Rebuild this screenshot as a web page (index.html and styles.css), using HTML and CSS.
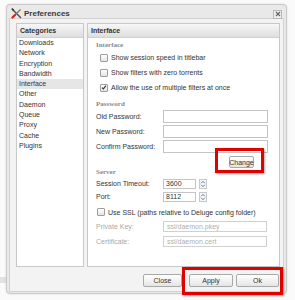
FILE: index.html
```html
<!DOCTYPE html>
<html>
<head>
<meta charset="utf-8">
<link rel="stylesheet" href="styles.css">
</head>
<body>
<div class="window">
  <div class="titlebar">
    <svg class="ticon" width="11" height="11" viewBox="0 0 11 11">
      <path d="M1.5 1.5 L9.5 9.5" stroke="#555" stroke-width="1.6" stroke-linecap="round"/>
      <path d="M9.5 1.5 L4 7" stroke="#777" stroke-width="1.2"/>
      <path d="M4 7 L1.5 9.5" stroke="#d22" stroke-width="2.2" stroke-linecap="round"/>
      <path d="M0.8 0.5 L2.8 2.5" stroke="#333" stroke-width="1.4"/>
    </svg>
    <span class="ttext">Preferences</span>
    <span class="tclose">
      <svg width="6" height="6" viewBox="0 0 6 6"><path d="M1 1 L5 5 M5 1 L1 5" stroke="#666" stroke-width="1.2"/></svg>
    </span>
  </div>
  <div class="frame">
    <div class="panels">
      <div class="cats">
        <div class="phead">Categories</div>
        <ul class="catlist">
          <li>Downloads</li>
          <li>Network</li>
          <li>Encryption</li>
          <li>Bandwidth</li>
          <li class="sel">Interface</li>
          <li>Other</li>
          <li>Daemon</li>
          <li>Queue</li>
          <li>Proxy</li>
          <li>Cache</li>
          <li>Plugins</li>
        </ul>
      </div>
      <div class="rp">
        <div class="phead">Interface</div>
        <div class="rbody">
          <div class="sect">Interface</div>
          <div class="checks">
            <div class="crow"><span class="cb"></span>Show session speed in titlebar</div>
            <div class="crow"><span class="cb"></span>Show filters with zero torrents</div>
            <div class="crow"><span class="cb on"><svg width="7" height="7" viewBox="0 0 7 7"><path d="M1.3 3.6 L2.8 5.2 L5.8 1.4" stroke="#333" stroke-width="1.3" fill="none"/></svg></span>Allow the use of multiple filters at once</div>
          </div>
          <div class="sect s2">Password</div>
          <div class="frow"><span class="flabel">Old Password:</span><span class="inp"></span></div>
          <div class="frow"><span class="flabel">New Password:</span><span class="inp"></span></div>
          <div class="frow"><span class="flabel">Confirm Password:</span><span class="inp"></span></div>
          <div class="brow"><span class="btn small">Change</span></div>
          <div class="sect s3">Server</div>
          <div class="srow"><span class="flabel">Session Timeout:</span><span class="sinp">3600</span><span class="spin"><svg width="8" height="10" viewBox="0 0 8 10"><path d="M1.5 4 L4 1.5 L6.5 4" stroke="#4b6e9e" stroke-width="1.2" fill="none"/><path d="M1.5 6 L4 8.5 L6.5 6" stroke="#4b6e9e" stroke-width="1.2" fill="none"/></svg></span></div>
          <div class="srow"><span class="flabel">Port:</span><span class="sinp">8112</span><span class="spin"><svg width="8" height="10" viewBox="0 0 8 10"><path d="M1.5 4 L4 1.5 L6.5 4" stroke="#4b6e9e" stroke-width="1.2" fill="none"/><path d="M1.5 6 L4 8.5 L6.5 6" stroke="#4b6e9e" stroke-width="1.2" fill="none"/></svg></span></div>
          <div class="crow ssl"><span class="cb"></span>Use SSL (paths relative to Deluge config folder)</div>
          <div class="krow"><span class="flabel dis">Private Key:</span><span class="kinp">ssl/daemon.pkey</span></div>
          <div class="krow"><span class="flabel dis">Certificate:</span><span class="kinp">ssl/daemon.cert</span></div>
        </div>
      </div>
    </div>
    <div class="footer">
      <span class="btn fb close">Close</span>
      <span class="btn fb apply">Apply</span>
      <span class="btn fb ok">Ok</span>
    </div>
  </div>
</div>
<div class="redbox rb1"></div>
<div class="redbox rb2"></div>
</body>
</html>
```
FILE: styles.css
```css
html, body { margin: 0; padding: 0; }
body {
  width: 295px; height: 300px; overflow: hidden; position: relative;
  background-color: #fafafa;
  font-family: "Liberation Sans", Arial, sans-serif;
  font-size: 7px; color: #333;
  white-space: nowrap;
}
body::before {
  content: ""; position: absolute; left: 0; top: 277px; width: 8px; height: 6px; background: #e2e2e2;
}
.window {
  position: relative;
  margin: 4px 0 0 6px; width: 281px; height: 290px; box-sizing: border-box;
  border: 1px solid #c9c9c9; border-radius: 4px;
  background: #e9e9e9;
  box-shadow: 0 0 2px rgba(0,0,0,0.15);
}
.titlebar { height: 12px; display: flex; align-items: center; padding: 1px 4px 0 4px; }
.ticon { margin-right: 2px; margin-top: 2px; }
.ttext { font-size: 8px; color: #3a3a3a; font-weight: bold; margin-top: 2px; }
.tclose {
  margin-left: auto; margin-top: 4px; width: 7px; height: 7px; border: 1px solid #b8b8b8; background: #eee;
  display: flex; align-items: center; justify-content: center;
}
.frame {
  margin: 0 2px 0 2px; height: 274px; box-sizing: border-box;
  border: 1px solid #d2d2d2; background: #f3f3f3;
  padding: 4px 3px 0 6px;
}
.panels { display: flex; gap: 3px; height: 244px; }
.cats { width: 68px; box-sizing: border-box; border: 1px solid #c8c8c8; background: #fff; }
.rp { flex: 1; box-sizing: border-box; border: 1px solid #c8c8c8; background: #fff; }
.phead {
  height: 13px; line-height: 13px; padding-left: 3px; font-weight: bold; color: #333; font-size: 7px;
  background: linear-gradient(#f7f7f7, #dedede); border-bottom: 1px solid #d0d0d0;
}
.catlist { list-style: none; margin: 0; padding: 0; }
.catlist li { height: 10.3px; line-height: 10.3px; padding-left: 2px; color: #333; }
.catlist li.sel { background: #e6e6e6; color: #3a3050; }
.rbody { padding: 2px 0 0 8px; }
.sect { height: 10px; line-height: 10px; font-family: "Liberation Serif", serif; font-weight: bold; color: #8a8a8a; font-size: 7px; }
.checks { margin-top: 0; }
.crow { height: 15px; display: flex; align-items: center; padding-left: 4px; color: #333; }
.cb {
  width: 6px; height: 6px; border: 1px solid #9e9e9e; border-radius: 1px;
  background: linear-gradient(#fff, #e4e4e4); margin-right: 3px; display: inline-flex; align-items: center; justify-content: center;
}
.s2 { margin-top: 4px; }
.frow { height: 15px; display: flex; align-items: center; }
.flabel { width: 67px; flex: none; color: #333; }
.flabel.dis { color: #aaa; }
.inp { width: 103px; height: 11px; border: 1px solid #c4c4c4; background: #fff; }
.brow { display: flex; justify-content: flex-start; margin-top: 2px; height: 12px; }
.btn {
  box-sizing: border-box; border: 1px solid #a9a9a9; border-radius: 2px;
  background: linear-gradient(#ffffff, #e5e5e5); color: #333;
  display: inline-flex; align-items: center; justify-content: center;
}
.small { margin-left: 133px; width: 25px; height: 12px; font-size: 7px; }
.s3 { margin-top: -1px; }
.srow { height: 13px; display: flex; align-items: center; }
.sinp { width: 33px; height: 10px; box-sizing: border-box; border: 1px solid #c4c4c4; line-height: 8px; padding-left: 2px; font-size: 7px; }
.spin { width: 8px; height: 10px; margin-left: 3px; border: 1px solid #c8c8c8; box-sizing: border-box; display: flex; align-items: center; justify-content: center; background: #f6f6f6; }
.spin svg { width: 6px; height: 8px; }
.crow.ssl { margin-top: 2px; height: 14px; padding-left: 1px; }
.krow { height: 15px; display: flex; align-items: center; }
.kinp { width: 104px; height: 11px; box-sizing: border-box; border: 1px solid #d0d0d0; color: #b0b0b0; padding-left: 3px; line-height: 9px; font-size: 7px; }
.footer { height: 25px; display: flex; align-items: center; justify-content: flex-end; padding-right: 1px; padding-top: 1px; }
.fb { height: 13px; font-size: 7px; }
.close { width: 39px; margin-right: 7px; }
.apply { width: 44px; margin-right: 3px; }
.ok { width: 43px; }
.redbox {
  position: absolute; border: 3px solid #e00000; box-sizing: border-box;
  box-shadow: 1px 1px 2px rgba(0,0,0,0.35);
}
.rb1 { left: 215px; top: 148px; width: 49px; height: 25px; }
.rb2 { left: 182px; top: 267px; width: 101px; height: 28px; }
```
